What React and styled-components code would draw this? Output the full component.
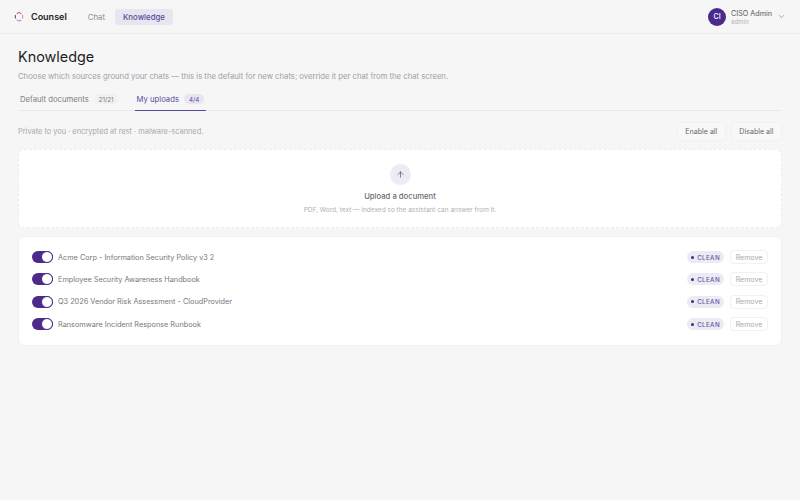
import React, { useState } from 'react';
import styled, { createGlobalStyle } from 'styled-components';
import { ArrowUp, ChevronDown } from 'lucide-react';

const GlobalStyle = createGlobalStyle`
  html, body {
    margin: 0;
    padding: 0;
    background: #f6f6f7;
    font-family: Inter, "Liberation Sans", sans-serif;
  }
  * { box-sizing: border-box; }
`;

const Page = styled.div`
  width: 800px;
  height: 500px;
  overflow: hidden;
`;

const Header = styled.header`
  height: 34px;
  padding: 0 14px 0 13px;
  display: flex;
  align-items: center;
  border-bottom: 1px solid #ebebed;
`;

const Brand = styled.div`
  display: flex;
  align-items: center;
  gap: 6px;
  font-size: 9px;
  font-weight: 600;
  color: #222226;
  margin-right: 13px;
`;

const Nav = styled.nav`
  display: flex;
  align-items: center;
  gap: 2px;
  flex: 1;
`;

const NavItem = styled.div`
  height: 16px;
  padding: 0 8px;
  display: flex;
  align-items: center;
  border-radius: 4px;
  font-size: 7.8px;
  font-weight: ${p => (p.$active ? 500 : 400)};
  color: ${p => (p.$active ? '#5b4a9c' : '#8d8d93')};
  background: ${p => (p.$active ? '#e7e5ef' : 'transparent')};
`;

const User = styled.div`
  display: flex;
  align-items: center;
  color: #909096;
`;

const Avatar = styled.div`
  width: 18px;
  height: 18px;
  border-radius: 50%;
  background: #4b2a8c;
  color: #f2f0f8;
  font-size: 7px;
  font-weight: 600;
  display: flex;
  align-items: center;
  justify-content: center;
  margin-right: 5px;
`;

const UserText = styled.div`
  display: flex;
  flex-direction: column;
  margin-right: 5px;
  padding-top: 1px;
`;

const UserName = styled.div`
  font-size: 7.2px;
  line-height: 9px;
  color: #55555b;
`;

const UserRole = styled.div`
  font-size: 6.2px;
  line-height: 8px;
  color: #b2b2b7;
`;

const Main = styled.main`
  padding: 13px 18px 0;
`;

const Title = styled.h1`
  margin: 0;
  font-size: 14.4px;
  line-height: 20px;
  font-weight: 400;
  color: #1f1f23;
`;

const Subtitle = styled.p`
  margin: 4px 0 0;
  font-size: 7.7px;
  line-height: 11px;
  color: #a0a0a6;
`;

const Tabs = styled.div`
  display: flex;
  gap: 14px;
  margin-top: 6px;
  border-bottom: 1px solid #e9e9ec;
`;

const Tab = styled.div`
  height: 23px;
  margin-bottom: -1px;
  padding: 0 2px;
  display: flex;
  align-items: center;
  gap: 5px;
  font-size: 7.7px;
  color: ${p => (p.$active ? '#5b4a9c' : '#808086')};
  border-bottom: 1px solid ${p => (p.$active ? '#5b4a9c' : 'transparent')};
`;

const TabCount = styled.span`
  height: 10px;
  padding: 0 5px;
  display: flex;
  align-items: center;
  border-radius: 5px;
  font-size: 6.2px;
  color: ${p => (p.$active ? '#5b4a9c' : '#77777d')};
  background: ${p => (p.$active ? '#e7e5ef' : '#f1f1f3')};
`;

const InfoRow = styled.div`
  display: flex;
  align-items: center;
  justify-content: space-between;
  margin-top: 11px;
`;

const InfoText = styled.span`
  font-size: 7.4px;
  color: #a7a7ad;
`;

const InfoActions = styled.div`
  display: flex;
  gap: 5px;
`;

const GhostButton = styled.button`
  height: 19px;
  padding: 0 7.5px;
  border: 1px solid #f1f1f3;
  border-radius: 4px;
  background: #f8f8f9;
  font-family: inherit;
  font-size: 7.1px;
  color: #66666c;
`;

const Dropzone = styled.div`
  margin-top: 8px;
  height: 79px;
  border: 1px dashed #ececef;
  border-radius: 6px;
  background: #fff;
  display: flex;
  flex-direction: column;
  align-items: center;
`;

const UploadIcon = styled.div`
  width: 21px;
  height: 21px;
  margin-top: 14px;
  border-radius: 50%;
  background: #edebf4;
  color: #5c5a68;
  display: flex;
  align-items: center;
  justify-content: center;
`;

const UploadTitle = styled.div`
  margin-top: 6px;
  font-size: 7.7px;
  line-height: 11px;
  font-weight: 500;
  color: #6c6c72;
`;

const UploadHint = styled.div`
  margin-top: 3px;
  font-size: 6.5px;
  line-height: 10px;
  color: #b0b0b6;
`;

const DocList = styled.div`
  margin-top: 8px;
  padding: 9px 13px 10px;
  border: 1px solid #f0f0f2;
  border-radius: 6px;
  background: #fff;
`;

const DocRow = styled.div`
  height: 22.3px;
  display: flex;
  align-items: center;
`;

const Toggle = styled.button`
  width: 21px;
  height: 12px;
  padding: 0;
  margin-right: 5px;
  border: none;
  border-radius: 6px;
  background: ${p => (p.$on ? '#4b2a8c' : '#d5d5da')};
  display: flex;
  align-items: center;
  justify-content: ${p => (p.$on ? 'flex-end' : 'flex-start')};
`;

const Knob = styled.span`
  width: 12px;
  height: 12px;
  border-radius: 50%;
  background: #fff;
  border: 1px solid #4b2a8c;
`;

const DocName = styled.span`
  flex: 1;
  font-size: 7.3px;
  color: #77777d;
`;

const CleanBadge = styled.span`
  height: 12px;
  padding: 0 4px;
  margin-right: 6px;
  display: flex;
  align-items: center;
  gap: 3px;
  border-radius: 6px;
  background: #ecebf3;
  color: #6353a4;
  font-size: 6.2px;
  font-weight: 500;
  letter-spacing: 0.4px;
`;

const BadgeDot = styled.span`
  width: 3px;
  height: 3px;
  border-radius: 50%;
  background: #3f2a80;
`;

const RemoveButton = styled.button`
  width: 38px;
  height: 14px;
  padding: 0;
  border: 1px solid #f1f1f3;
  border-radius: 4px;
  background: #fff;
  font-family: inherit;
  font-size: 7px;
  color: #a9a9af;
`;

const Logo = () => (
  <svg width="12" height="12" viewBox="0 0 12 12" fill="none" strokeWidth="1.1" strokeLinecap="round">
    <path d="M4 2.6 L6 1.4 L8 2.6" stroke="#d8587a" />
    <path d="M9.6 4.4 L9.6 7" stroke="#d98aa8" />
    <path d="M8 9 L6 10.2 L4 9" stroke="#a79cd0" />
    <path d="M2.4 7 L2.4 4.4" stroke="#5b4a9c" />
  </svg>
);

const docs = [
  'Acme Corp - Information Security Policy v3 2',
  'Employee Security Awareness Handbook',
  'Q3 2026 Vendor Risk Assessment - CloudProvider',
  'Ransomware Incident Response Runbook',
];

export default function App() {
  const [enabled, setEnabled] = useState(docs.map(() => true));

  const flip = (index) => {
    setEnabled(enabled.map((on, i) => (i === index ? !on : on)));
  };

  return (
    <Page>
      <GlobalStyle />
      <Header>
        <Brand>
          <Logo />
          Counsel
        </Brand>
        <Nav>
          <NavItem>Chat</NavItem>
          <NavItem $active>Knowledge</NavItem>
        </Nav>
        <User>
          <Avatar>CI</Avatar>
          <UserText>
            <UserName>CISO Admin</UserName>
            <UserRole>admin</UserRole>
          </UserText>
          <ChevronDown size={9} />
        </User>
      </Header>
      <Main>
        <Title>Knowledge</Title>
        <Subtitle>Choose which sources ground your chats — this is the default for new chats; override it per chat from the chat screen.</Subtitle>
        <Tabs>
          <Tab>Default documents <TabCount>21/21</TabCount></Tab>
          <Tab $active>My uploads <TabCount $active>4/4</TabCount></Tab>
        </Tabs>
        <InfoRow>
          <InfoText>Private to you · encrypted at rest · malware-scanned.</InfoText>
          <InfoActions>
            <GhostButton>Enable all</GhostButton>
            <GhostButton>Disable all</GhostButton>
          </InfoActions>
        </InfoRow>
        <Dropzone>
          <UploadIcon><ArrowUp size={9} /></UploadIcon>
          <UploadTitle>Upload a document</UploadTitle>
          <UploadHint>PDF, Word, text — indexed so the assistant can answer from it.</UploadHint>
        </Dropzone>
        <DocList>
          {docs.map((name, i) => (
            <DocRow key={name}>
              <Toggle $on={enabled[i]} onClick={() => flip(i)}><Knob /></Toggle>
              <DocName>{name}</DocName>
              <CleanBadge><BadgeDot />CLEAN</CleanBadge>
              <RemoveButton>Remove</RemoveButton>
            </DocRow>
          ))}
        </DocList>
      </Main>
    </Page>
  );
}
